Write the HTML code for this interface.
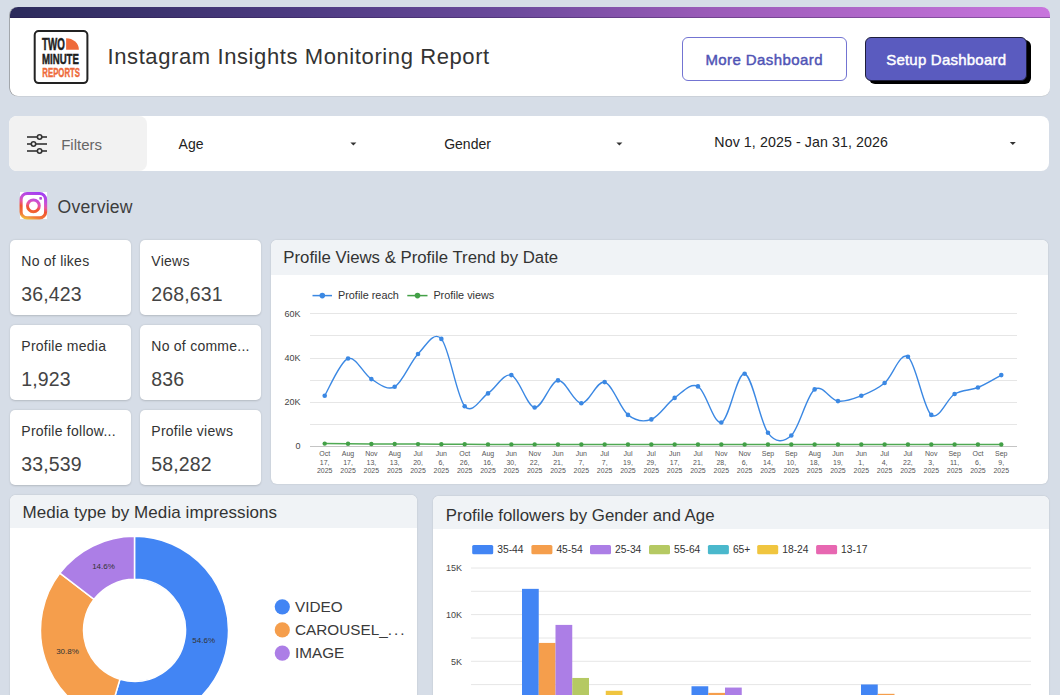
<!DOCTYPE html>
<html><head><meta charset="utf-8">
<style>
*{box-sizing:border-box;margin:0;padding:0}
html,body{width:1060px;height:695px;overflow:hidden;background:#d6dde7;font-family:"Liberation Sans",sans-serif;color:#333}
.abs{position:absolute}
#hdr{left:10px;top:7px;width:1040px;height:89px;background:#fff;border-radius:8px;overflow:hidden;box-shadow:-0.7px 0 0 0 rgba(110,110,110,0.7), 0 0.6px 0 0 rgba(150,150,150,0.35)}
#hdr .bar{position:absolute;left:0;top:0;width:100%;height:11px;background:linear-gradient(90deg,#2c2b5c 0%,#4d3b82 28%,#6b4a9c 48%,#9a5bb8 67%,#c875dd 100%);border-bottom:1px solid rgba(40,20,70,0.35)}
#btn1{left:682px;top:37px;width:165px;height:44px;border:1px solid #7374d2;border-radius:6px;background:#fff}
#btn2{left:865px;top:37px;width:162px;height:44px;border:1px solid #1e1e3a;border-radius:6px;background:#5a5bbf;box-shadow:4px 3px 0 #000}
#filt{left:9px;top:116px;width:1040px;height:55px;background:#fff;border-radius:8px}
#filtl{left:9px;top:116px;width:138px;height:55px;background:#f2f2f2;border-radius:8px}
.card{position:absolute;width:121px;height:75px;background:#fff;border-radius:5px;box-shadow:0 0.5px 2px rgba(0,0,0,0.16)}
.panel{position:absolute;background:#fff;border-radius:6px;overflow:hidden;box-shadow:0 0 2px rgba(0,0,0,0.14)}
.panel .ph{position:absolute;left:0;top:0;width:100%;background:#f0f3f6}
svg text{font-family:"Liberation Sans",sans-serif}
svg text.yl{font-size:9px;fill:#444}
svg text.xl{font-size:7px;fill:#555}
svg text.lg{font-size:10.85px;fill:#333}
svg text.lg2{font-size:10.3px;fill:#333}
svg text.dl{font-size:8px;fill:#333}
svg text.dlg{font-size:15.3px;fill:#3a3a3a}
svg text.kl{font-size:14px;fill:#333;letter-spacing:0.25px}
svg text.kv{font-size:19.5px;fill:#444;letter-spacing:0.15px}
svg text.pt{fill:#333}
</style></head><body>
<div id="hdr" class="abs"><div class="bar"></div></div>
<div id="btn1" class="abs"></div>
<div id="btn2" class="abs"></div>
<div id="filt" class="abs"></div>
<div id="filtl" class="abs"></div>

<div class="card" style="left:10px;top:240px"></div>
<div class="card" style="left:140px;top:240px"></div>
<div class="card" style="left:10px;top:325px"></div>
<div class="card" style="left:140px;top:325px"></div>
<div class="card" style="left:10px;top:410px"></div>
<div class="card" style="left:140px;top:410px"></div>

<div class="panel" style="left:271px;top:240px;width:777px;height:244px"><div class="ph" style="height:35px"></div></div>
<div class="panel" style="left:10px;top:495px;width:407px;height:220px"><div class="ph" style="height:33px"></div></div>
<div class="panel" style="left:433px;top:496px;width:616px;height:220px"><div class="ph" style="height:33px"></div></div>

<svg class="abs" style="left:0;top:0" width="1060" height="695">
<defs><linearGradient id="ig" x1="0.2" y1="0" x2="0.5" y2="1"><stop offset="0" stop-color="#9c4fe6"/><stop offset="0.45" stop-color="#e9508c"/><stop offset="1" stop-color="#fbb838"/></linearGradient></defs>
<!-- logo -->
<rect x="34.7" y="31.1" width="52.7" height="52" rx="4" fill="#fff" stroke="#222" stroke-width="2"/>
<text x="42" y="49.7" font-size="15.8" font-weight="bold" fill="#1d1d1d" stroke="#1d1d1d" stroke-width="0.5" textLength="22.8" lengthAdjust="spacingAndGlyphs">TWO</text>
<path d="M66.1 38.2 A12.8 11.5 0 0 1 78.9 49.7 L66.1 49.7 Z" fill="#ee6a3a"/>
<text x="42" y="64" font-size="15.2" font-weight="bold" fill="#1d1d1d" stroke="#1d1d1d" stroke-width="0.5" textLength="36.9" lengthAdjust="spacingAndGlyphs">MINUTE</text>
<text x="42.3" y="76.5" font-size="13.7" font-weight="bold" fill="#ee6a3a" stroke="#ee6a3a" stroke-width="0.45" textLength="37.7" lengthAdjust="spacingAndGlyphs">REPORTS</text>
<text x="107.5" y="63.5" font-size="22" fill="#333" letter-spacing="0.6">Instagram Insights Monitoring Report</text>
<text x="705.4" y="64.6" font-size="15" fill="#5054b5" stroke="#5054b5" stroke-width="0.45" letter-spacing="0.42">More Dashboard</text>
<text x="886.2" y="64.9" font-size="15" fill="#fff" stroke="#fff" stroke-width="0.45" letter-spacing="0.22">Setup Dashboard</text>
<!-- filters -->
<g stroke="#333" stroke-width="1.6" fill="#f2f2f2">
  <line x1="27" y1="137" x2="47" y2="137"/><line x1="27" y1="144" x2="47" y2="144"/><line x1="27" y1="151" x2="47" y2="151"/>
  <circle cx="39.6" cy="137" r="2.2"/><circle cx="33.5" cy="144" r="2.2"/><circle cx="39.6" cy="151" r="2.2"/>
</g>
<text x="61.2" y="149.9" font-size="15" fill="#666">Filters</text>
<text x="178.6" y="148.9" font-size="14" fill="#222">Age</text>
<path d="M350.4 142.5 h6 l-3 3 z" fill="#333"/>
<text x="444.2" y="148.9" font-size="14" fill="#222">Gender</text>
<path d="M616.4 142.5 h6 l-3 3 z" fill="#333"/>
<text x="714.3" y="147" font-size="14.2" fill="#222" letter-spacing="0.1">Nov 1, 2025 - Jan 31, 2026</text>
<path d="M1009.8 142 h6 l-3 3 z" fill="#333"/>
<!-- instagram -->
<linearGradient id="ig2" gradientUnits="userSpaceOnUse" x1="37" y1="192" x2="29" y2="220"><stop offset="0" stop-color="#a13ff2"/><stop offset="0.3" stop-color="#c84fd6"/><stop offset="0.45" stop-color="#e9559f"/><stop offset="0.6" stop-color="#f0532e"/><stop offset="0.85" stop-color="#f2783a"/><stop offset="1" stop-color="#f0c23c"/></linearGradient>
<rect x="20" y="192" width="27" height="27" fill="#fff"/>
<rect x="21.1" y="193.5" width="24.5" height="24.4" rx="6" fill="none" stroke="url(#ig2)" stroke-width="3.1"/>
<circle cx="33.4" cy="205.8" r="5.9" fill="none" stroke="url(#ig2)" stroke-width="3"/>
<rect x="39.3" y="197" width="2.7" height="2.7" rx="0.8" fill="#b251d8"/>
<text x="57.5" y="212.9" font-size="17.6" fill="#3d3d3d" letter-spacing="0.25">Overview</text>
<!-- KPI -->
<text x="21.3" y="265.9" class="kl">No of likes</text><text x="21.3" y="300.6" class="kv">36,423</text>
<text x="151.3" y="265.9" class="kl">Views</text><text x="151.3" y="300.6" class="kv">268,631</text>
<text x="21.3" y="350.9" class="kl">Profile media</text><text x="21.3" y="385.6" class="kv">1,923</text>
<text x="151.3" y="350.9" class="kl">No of comme...</text><text x="151.3" y="385.6" class="kv">836</text>
<text x="21.3" y="435.9" class="kl">Profile follow...</text><text x="21.3" y="470.6" class="kv">33,539</text>
<text x="151.3" y="435.9" class="kl">Profile views</text><text x="151.3" y="470.6" class="kv">58,282</text>
<text x="283.3" y="263.2" font-size="16.8" class="pt">Profile Views &amp; Profile Trend by Date</text>
<text x="22.4" y="518.3" font-size="17" class="pt" letter-spacing="0.08">Media type by Media impressions</text>
<text x="445.8" y="520.8" font-size="16.85" class="pt">Profile followers by Gender and Age</text>
<line x1="310" y1="313.5" x2="1017" y2="313.5" stroke="#e6e6e6" stroke-width="1"/>
<line x1="310" y1="335.5" x2="1017" y2="335.5" stroke="#e6e6e6" stroke-width="1"/>
<line x1="310" y1="358.5" x2="1017" y2="358.5" stroke="#e6e6e6" stroke-width="1"/>
<line x1="310" y1="380.5" x2="1017" y2="380.5" stroke="#e6e6e6" stroke-width="1"/>
<line x1="310" y1="402.5" x2="1017" y2="402.5" stroke="#e6e6e6" stroke-width="1"/>
<line x1="310" y1="424.5" x2="1017" y2="424.5" stroke="#e6e6e6" stroke-width="1"/>
<line x1="310" y1="446.5" x2="1017" y2="446.5" stroke="#c4c4c4" stroke-width="1"/>
<text x="300.5" y="316.9" text-anchor="end" class="yl">60K</text>
<text x="300.5" y="361.2" text-anchor="end" class="yl">40K</text>
<text x="300.5" y="405.2" text-anchor="end" class="yl">20K</text>
<text x="300.5" y="449.2" text-anchor="end" class="yl">0</text>
<path d="M324.70,443.60 L348.03,443.80 L371.36,444.00 L394.69,444.00 L418.02,444.10 L441.35,444.20 L464.68,444.30 L488.01,444.40 L511.34,444.40 L534.67,444.40 L558.00,444.50 L581.33,444.50 L604.66,444.50 L627.99,444.50 L651.32,444.50 L674.65,444.50 L697.98,444.50 L721.31,444.50 L744.64,444.50 L767.97,444.50 L791.30,444.50 L814.63,444.50 L837.96,444.50 L861.29,444.50 L884.62,444.50 L907.95,444.50 L931.28,444.50 L954.61,444.50 L977.94,444.50 L1001.27,444.50" fill="none" stroke="#4fa953" stroke-width="1.5"/>
<path d="M324.70,395.70 C328.59,389.50 340.25,361.27 348.03,358.50 C355.81,355.73 363.58,374.38 371.36,379.10 C379.14,383.82 386.91,390.98 394.69,386.80 C402.47,382.62 410.24,361.98 418.02,354.00 C425.80,346.02 433.57,330.20 441.35,338.90 C449.13,347.60 456.90,397.12 464.68,406.20 C472.46,415.28 480.23,398.58 488.01,393.40 C495.79,388.22 503.56,372.75 511.34,375.10 C519.12,377.45 526.89,406.62 534.67,407.50 C542.45,408.38 550.22,381.12 558.00,380.40 C565.78,379.68 573.55,402.92 581.33,403.20 C589.11,403.48 596.88,380.15 604.66,382.10 C612.44,384.05 620.21,408.68 627.99,414.90 C635.77,421.12 643.54,422.23 651.32,419.40 C659.10,416.57 666.87,403.40 674.65,397.90 C682.43,392.40 690.20,382.30 697.98,386.40 C705.76,390.50 713.53,424.60 721.31,422.50 C729.09,420.40 736.86,372.08 744.64,373.80 C752.42,375.52 760.19,422.52 767.97,432.80 C775.75,443.08 783.52,442.73 791.30,435.50 C799.08,428.27 806.85,395.13 814.63,389.40 C822.41,383.67 830.18,400.03 837.96,401.10 C845.74,402.17 853.51,398.82 861.29,395.80 C869.07,392.78 876.84,389.50 884.62,383.00 C892.40,376.50 900.17,351.48 907.95,356.80 C915.73,362.12 923.50,408.70 931.28,414.90 C939.06,421.10 946.83,398.57 954.61,394.00 C962.39,389.43 970.16,390.65 977.94,387.50 C985.72,384.35 997.38,377.17 1001.27,375.10" fill="none" stroke="#3b88e3" stroke-width="1.4"/>
<circle cx="324.70" cy="443.60" r="2.2" fill="#43a047"/>
<circle cx="348.03" cy="443.80" r="2.2" fill="#43a047"/>
<circle cx="371.36" cy="444.00" r="2.2" fill="#43a047"/>
<circle cx="394.69" cy="444.00" r="2.2" fill="#43a047"/>
<circle cx="418.02" cy="444.10" r="2.2" fill="#43a047"/>
<circle cx="441.35" cy="444.20" r="2.2" fill="#43a047"/>
<circle cx="464.68" cy="444.30" r="2.2" fill="#43a047"/>
<circle cx="488.01" cy="444.40" r="2.2" fill="#43a047"/>
<circle cx="511.34" cy="444.40" r="2.2" fill="#43a047"/>
<circle cx="534.67" cy="444.40" r="2.2" fill="#43a047"/>
<circle cx="558.00" cy="444.50" r="2.2" fill="#43a047"/>
<circle cx="581.33" cy="444.50" r="2.2" fill="#43a047"/>
<circle cx="604.66" cy="444.50" r="2.2" fill="#43a047"/>
<circle cx="627.99" cy="444.50" r="2.2" fill="#43a047"/>
<circle cx="651.32" cy="444.50" r="2.2" fill="#43a047"/>
<circle cx="674.65" cy="444.50" r="2.2" fill="#43a047"/>
<circle cx="697.98" cy="444.50" r="2.2" fill="#43a047"/>
<circle cx="721.31" cy="444.50" r="2.2" fill="#43a047"/>
<circle cx="744.64" cy="444.50" r="2.2" fill="#43a047"/>
<circle cx="767.97" cy="444.50" r="2.2" fill="#43a047"/>
<circle cx="791.30" cy="444.50" r="2.2" fill="#43a047"/>
<circle cx="814.63" cy="444.50" r="2.2" fill="#43a047"/>
<circle cx="837.96" cy="444.50" r="2.2" fill="#43a047"/>
<circle cx="861.29" cy="444.50" r="2.2" fill="#43a047"/>
<circle cx="884.62" cy="444.50" r="2.2" fill="#43a047"/>
<circle cx="907.95" cy="444.50" r="2.2" fill="#43a047"/>
<circle cx="931.28" cy="444.50" r="2.2" fill="#43a047"/>
<circle cx="954.61" cy="444.50" r="2.2" fill="#43a047"/>
<circle cx="977.94" cy="444.50" r="2.2" fill="#43a047"/>
<circle cx="1001.27" cy="444.50" r="2.2" fill="#43a047"/>
<circle cx="324.70" cy="395.70" r="2.3" fill="#3b88e3"/>
<circle cx="348.03" cy="358.50" r="2.3" fill="#3b88e3"/>
<circle cx="371.36" cy="379.10" r="2.3" fill="#3b88e3"/>
<circle cx="394.69" cy="386.80" r="2.3" fill="#3b88e3"/>
<circle cx="418.02" cy="354.00" r="2.3" fill="#3b88e3"/>
<circle cx="441.35" cy="338.90" r="2.3" fill="#3b88e3"/>
<circle cx="464.68" cy="406.20" r="2.3" fill="#3b88e3"/>
<circle cx="488.01" cy="393.40" r="2.3" fill="#3b88e3"/>
<circle cx="511.34" cy="375.10" r="2.3" fill="#3b88e3"/>
<circle cx="534.67" cy="407.50" r="2.3" fill="#3b88e3"/>
<circle cx="558.00" cy="380.40" r="2.3" fill="#3b88e3"/>
<circle cx="581.33" cy="403.20" r="2.3" fill="#3b88e3"/>
<circle cx="604.66" cy="382.10" r="2.3" fill="#3b88e3"/>
<circle cx="627.99" cy="414.90" r="2.3" fill="#3b88e3"/>
<circle cx="651.32" cy="419.40" r="2.3" fill="#3b88e3"/>
<circle cx="674.65" cy="397.90" r="2.3" fill="#3b88e3"/>
<circle cx="697.98" cy="386.40" r="2.3" fill="#3b88e3"/>
<circle cx="721.31" cy="422.50" r="2.3" fill="#3b88e3"/>
<circle cx="744.64" cy="373.80" r="2.3" fill="#3b88e3"/>
<circle cx="767.97" cy="432.80" r="2.3" fill="#3b88e3"/>
<circle cx="791.30" cy="435.50" r="2.3" fill="#3b88e3"/>
<circle cx="814.63" cy="389.40" r="2.3" fill="#3b88e3"/>
<circle cx="837.96" cy="401.10" r="2.3" fill="#3b88e3"/>
<circle cx="861.29" cy="395.80" r="2.3" fill="#3b88e3"/>
<circle cx="884.62" cy="383.00" r="2.3" fill="#3b88e3"/>
<circle cx="907.95" cy="356.80" r="2.3" fill="#3b88e3"/>
<circle cx="931.28" cy="414.90" r="2.3" fill="#3b88e3"/>
<circle cx="954.61" cy="394.00" r="2.3" fill="#3b88e3"/>
<circle cx="977.94" cy="387.50" r="2.3" fill="#3b88e3"/>
<circle cx="1001.27" cy="375.10" r="2.3" fill="#3b88e3"/>
<text x="324.70" y="456.3" text-anchor="middle" class="xl">Oct</text>
<text x="324.70" y="464.8" text-anchor="middle" class="xl">17,</text>
<text x="324.70" y="473.1" text-anchor="middle" class="xl">2025</text>
<text x="348.03" y="456.3" text-anchor="middle" class="xl">Aug</text>
<text x="348.03" y="464.8" text-anchor="middle" class="xl">17,</text>
<text x="348.03" y="473.1" text-anchor="middle" class="xl">2025</text>
<text x="371.36" y="456.3" text-anchor="middle" class="xl">Nov</text>
<text x="371.36" y="464.8" text-anchor="middle" class="xl">13,</text>
<text x="371.36" y="473.1" text-anchor="middle" class="xl">2025</text>
<text x="394.69" y="456.3" text-anchor="middle" class="xl">Aug</text>
<text x="394.69" y="464.8" text-anchor="middle" class="xl">13,</text>
<text x="394.69" y="473.1" text-anchor="middle" class="xl">2025</text>
<text x="418.02" y="456.3" text-anchor="middle" class="xl">Jul</text>
<text x="418.02" y="464.8" text-anchor="middle" class="xl">20,</text>
<text x="418.02" y="473.1" text-anchor="middle" class="xl">2025</text>
<text x="441.35" y="456.3" text-anchor="middle" class="xl">Jun</text>
<text x="441.35" y="464.8" text-anchor="middle" class="xl">6,</text>
<text x="441.35" y="473.1" text-anchor="middle" class="xl">2025</text>
<text x="464.68" y="456.3" text-anchor="middle" class="xl">Oct</text>
<text x="464.68" y="464.8" text-anchor="middle" class="xl">26,</text>
<text x="464.68" y="473.1" text-anchor="middle" class="xl">2025</text>
<text x="488.01" y="456.3" text-anchor="middle" class="xl">Aug</text>
<text x="488.01" y="464.8" text-anchor="middle" class="xl">16,</text>
<text x="488.01" y="473.1" text-anchor="middle" class="xl">2025</text>
<text x="511.34" y="456.3" text-anchor="middle" class="xl">Jun</text>
<text x="511.34" y="464.8" text-anchor="middle" class="xl">30,</text>
<text x="511.34" y="473.1" text-anchor="middle" class="xl">2025</text>
<text x="534.67" y="456.3" text-anchor="middle" class="xl">Nov</text>
<text x="534.67" y="464.8" text-anchor="middle" class="xl">22,</text>
<text x="534.67" y="473.1" text-anchor="middle" class="xl">2025</text>
<text x="558.00" y="456.3" text-anchor="middle" class="xl">Jun</text>
<text x="558.00" y="464.8" text-anchor="middle" class="xl">21,</text>
<text x="558.00" y="473.1" text-anchor="middle" class="xl">2025</text>
<text x="581.33" y="456.3" text-anchor="middle" class="xl">Jun</text>
<text x="581.33" y="464.8" text-anchor="middle" class="xl">7,</text>
<text x="581.33" y="473.1" text-anchor="middle" class="xl">2025</text>
<text x="604.66" y="456.3" text-anchor="middle" class="xl">Jul</text>
<text x="604.66" y="464.8" text-anchor="middle" class="xl">7,</text>
<text x="604.66" y="473.1" text-anchor="middle" class="xl">2025</text>
<text x="627.99" y="456.3" text-anchor="middle" class="xl">Jul</text>
<text x="627.99" y="464.8" text-anchor="middle" class="xl">19,</text>
<text x="627.99" y="473.1" text-anchor="middle" class="xl">2025</text>
<text x="651.32" y="456.3" text-anchor="middle" class="xl">Jul</text>
<text x="651.32" y="464.8" text-anchor="middle" class="xl">29,</text>
<text x="651.32" y="473.1" text-anchor="middle" class="xl">2025</text>
<text x="674.65" y="456.3" text-anchor="middle" class="xl">Jun</text>
<text x="674.65" y="464.8" text-anchor="middle" class="xl">17,</text>
<text x="674.65" y="473.1" text-anchor="middle" class="xl">2025</text>
<text x="697.98" y="456.3" text-anchor="middle" class="xl">Jul</text>
<text x="697.98" y="464.8" text-anchor="middle" class="xl">21,</text>
<text x="697.98" y="473.1" text-anchor="middle" class="xl">2025</text>
<text x="721.31" y="456.3" text-anchor="middle" class="xl">Nov</text>
<text x="721.31" y="464.8" text-anchor="middle" class="xl">28,</text>
<text x="721.31" y="473.1" text-anchor="middle" class="xl">2025</text>
<text x="744.64" y="456.3" text-anchor="middle" class="xl">Nov</text>
<text x="744.64" y="464.8" text-anchor="middle" class="xl">6,</text>
<text x="744.64" y="473.1" text-anchor="middle" class="xl">2025</text>
<text x="767.97" y="456.3" text-anchor="middle" class="xl">Sep</text>
<text x="767.97" y="464.8" text-anchor="middle" class="xl">14,</text>
<text x="767.97" y="473.1" text-anchor="middle" class="xl">2025</text>
<text x="791.30" y="456.3" text-anchor="middle" class="xl">Sep</text>
<text x="791.30" y="464.8" text-anchor="middle" class="xl">10,</text>
<text x="791.30" y="473.1" text-anchor="middle" class="xl">2025</text>
<text x="814.63" y="456.3" text-anchor="middle" class="xl">Aug</text>
<text x="814.63" y="464.8" text-anchor="middle" class="xl">18,</text>
<text x="814.63" y="473.1" text-anchor="middle" class="xl">2025</text>
<text x="837.96" y="456.3" text-anchor="middle" class="xl">Jun</text>
<text x="837.96" y="464.8" text-anchor="middle" class="xl">19,</text>
<text x="837.96" y="473.1" text-anchor="middle" class="xl">2025</text>
<text x="861.29" y="456.3" text-anchor="middle" class="xl">Jun</text>
<text x="861.29" y="464.8" text-anchor="middle" class="xl">1,</text>
<text x="861.29" y="473.1" text-anchor="middle" class="xl">2025</text>
<text x="884.62" y="456.3" text-anchor="middle" class="xl">Jul</text>
<text x="884.62" y="464.8" text-anchor="middle" class="xl">4,</text>
<text x="884.62" y="473.1" text-anchor="middle" class="xl">2025</text>
<text x="907.95" y="456.3" text-anchor="middle" class="xl">Jul</text>
<text x="907.95" y="464.8" text-anchor="middle" class="xl">22,</text>
<text x="907.95" y="473.1" text-anchor="middle" class="xl">2025</text>
<text x="931.28" y="456.3" text-anchor="middle" class="xl">Nov</text>
<text x="931.28" y="464.8" text-anchor="middle" class="xl">3,</text>
<text x="931.28" y="473.1" text-anchor="middle" class="xl">2025</text>
<text x="954.61" y="456.3" text-anchor="middle" class="xl">Sep</text>
<text x="954.61" y="464.8" text-anchor="middle" class="xl">11,</text>
<text x="954.61" y="473.1" text-anchor="middle" class="xl">2025</text>
<text x="977.94" y="456.3" text-anchor="middle" class="xl">Oct</text>
<text x="977.94" y="464.8" text-anchor="middle" class="xl">6,</text>
<text x="977.94" y="473.1" text-anchor="middle" class="xl">2025</text>
<text x="1001.27" y="456.3" text-anchor="middle" class="xl">Sep</text>
<text x="1001.27" y="464.8" text-anchor="middle" class="xl">9,</text>
<text x="1001.27" y="473.1" text-anchor="middle" class="xl">2025</text>
<line x1="312.5" y1="295.6" x2="332" y2="295.6" stroke="#3b88e3" stroke-width="1.5"/><circle cx="322.3" cy="295.6" r="2.8" fill="#3b88e3"/>
<text x="338" y="299.2" class="lg">Profile reach</text>
<line x1="407.3" y1="295.6" x2="427.5" y2="295.6" stroke="#43a047" stroke-width="1.5"/><circle cx="417.5" cy="295.6" r="2.8" fill="#43a047"/>
<text x="433.4" y="299.2" class="lg">Profile views</text>
<path d="M134.50,536.30 A94.0,94.0 0 1 1 107.71,720.40 L119.96,679.18 A51.0,51.0 0 1 0 134.50,579.30 Z" fill="#4285f4" stroke="#fff" stroke-width="1.5"/>
<path d="M107.71,720.40 A94.0,94.0 0 0 1 59.86,573.15 L94.01,599.30 A51.0,51.0 0 0 0 119.96,679.18 Z" fill="#f59e4c" stroke="#fff" stroke-width="1.5"/>
<path d="M59.86,573.15 A94.0,94.0 0 0 1 134.50,536.30 L134.50,579.30 A51.0,51.0 0 0 0 94.01,599.30 Z" fill="#ac7ee6" stroke="#fff" stroke-width="1.5"/>
<text x="203.7" y="643" text-anchor="middle" class="dl">54.6%</text>
<text x="67.5" y="654" text-anchor="middle" class="dl">30.8%</text>
<text x="103.5" y="569" text-anchor="middle" class="dl">14.6%</text>
<circle cx="282.3" cy="606.8" r="7.6" fill="#4285f4"/>
<text x="295" y="611.8" class="dlg">VIDEO</text>
<circle cx="282.3" cy="629.9" r="7.6" fill="#f59e4c"/>
<text x="295" y="634.9" class="dlg">CAROUSEL_<tspan letter-spacing="2">...</tspan></text>
<circle cx="282.3" cy="653.1" r="7.6" fill="#ac7ee6"/>
<text x="295" y="658.1" class="dlg">IMAGE</text>
<line x1="471" y1="568.0" x2="1031" y2="568.0" stroke="#e6e6e6" stroke-width="1"/>
<line x1="471" y1="591.3" x2="1031" y2="591.3" stroke="#e6e6e6" stroke-width="1"/>
<line x1="471" y1="614.6" x2="1031" y2="614.6" stroke="#e6e6e6" stroke-width="1"/>
<line x1="471" y1="638.0" x2="1031" y2="638.0" stroke="#e6e6e6" stroke-width="1"/>
<line x1="471" y1="661.3" x2="1031" y2="661.3" stroke="#e6e6e6" stroke-width="1"/>
<line x1="471" y1="684.6" x2="1031" y2="684.6" stroke="#e6e6e6" stroke-width="1"/>
<text x="462" y="571.2" text-anchor="end" class="yl">15K</text>
<text x="462" y="617.8" text-anchor="end" class="yl">10K</text>
<text x="462" y="664.5" text-anchor="end" class="yl">5K</text>
<rect x="522.00" y="588.85" width="16.75" height="119.15" fill="#4285f4"/>
<rect x="538.75" y="642.92" width="16.75" height="65.08" fill="#f59e4c"/>
<rect x="555.50" y="624.90" width="16.75" height="83.10" fill="#ac7ee6"/>
<rect x="572.25" y="677.96" width="16.75" height="30.04" fill="#b5c963"/>
<rect x="605.75" y="690.78" width="16.75" height="17.22" fill="#f0c53f"/>
<rect x="691.50" y="686.26" width="16.75" height="21.74" fill="#4285f4"/>
<rect x="708.25" y="692.88" width="16.75" height="15.12" fill="#f59e4c"/>
<rect x="725.00" y="687.56" width="16.75" height="20.44" fill="#ac7ee6"/>
<rect x="861.00" y="684.48" width="16.75" height="23.52" fill="#4285f4"/>
<rect x="877.75" y="693.82" width="16.75" height="14.18" fill="#f59e4c"/>
<rect x="472.2" y="545" width="21" height="9.3" rx="1.5" fill="#4285f4"/>
<text x="497.2" y="553.2" class="lg2">35-44</text>
<rect x="531.4" y="545" width="21" height="9.3" rx="1.5" fill="#f59e4c"/>
<text x="556.4" y="553.2" class="lg2">45-54</text>
<rect x="590.0" y="545" width="21" height="9.3" rx="1.5" fill="#ac7ee6"/>
<text x="615.0" y="553.2" class="lg2">25-34</text>
<rect x="649.0" y="545" width="21" height="9.3" rx="1.5" fill="#b5c963"/>
<text x="674.0" y="553.2" class="lg2">55-64</text>
<rect x="707.9" y="545" width="21" height="9.3" rx="1.5" fill="#4ab8cc"/>
<text x="732.9" y="553.2" class="lg2">65+</text>
<rect x="757.2" y="545" width="21" height="9.3" rx="1.5" fill="#f0c53f"/>
<text x="782.2" y="553.2" class="lg2">18-24</text>
<rect x="816.1" y="545" width="21" height="9.3" rx="1.5" fill="#e767b1"/>
<text x="841.1" y="553.2" class="lg2">13-17</text>
</svg>
</body></html>
